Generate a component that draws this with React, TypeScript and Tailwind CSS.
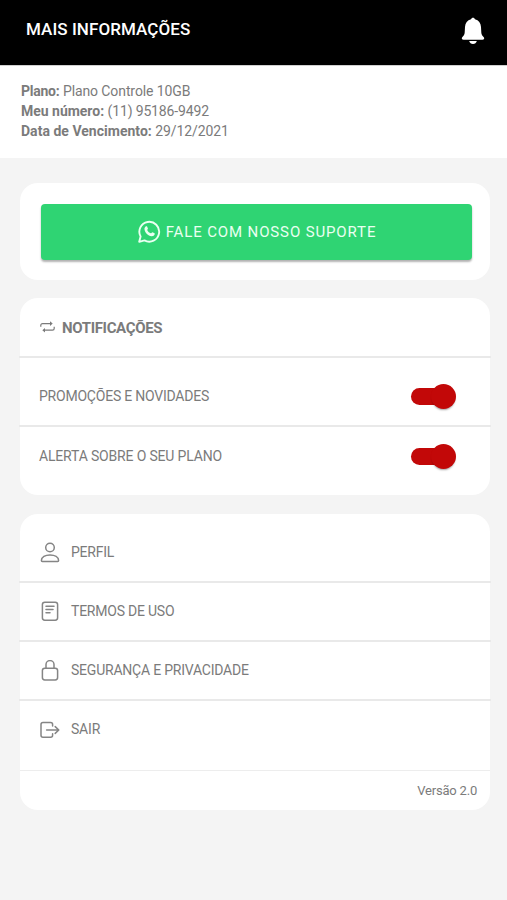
import type { ReactNode } from "react"

const details = [
  { label: "Plano:", value: "Plano Controle 10GB", labelClass: "tracking-[-0.25px]", valueClass: "tracking-[-0.1px]" },
  { label: "Meu número:", value: "(11) 95186-9492", labelClass: "tracking-[-0.02px]", valueClass: "tracking-[-0.15px]" },
  { label: "Data de Vencimento:", value: "29/12/2021", labelClass: "tracking-[0.02px]", valueClass: "tracking-[-0.1px]" },
]

const menu = [
  {
    title: "PERFIL",
    titleClass: "tracking-[-0.25px]",
    icon: (
      <>
        <circle cx="10" cy="5.5" r="4.3" />
        <path d="M1.4 18.6c0-3.6 3.8-5.700 8.6-5.700s8.6 2.100 8.6 5.700c0 .5-.4.9-.9.9H2.3c-.5 0-.9-.4-.9-.9z" />
      </>
    ),
  },
  {
    title: "TERMOS DE USO",
    titleClass: "tracking-[-0.22px]",
    icon: (
      <>
        <rect x="2.4" y="1.2" width="15.2" height="18" rx="2.4" />
        <path d="M6 5.2h8M6 8.4h7M6 11.8h4" />
      </>
    ),
  },
  {
    title: "SEGURANÇA E PRIVACIDADE",
    titleClass: "tracking-[-0.22px]",
    icon: (
      <>
        <rect x="2.4" y="8.2" width="15.2" height="11.8" rx="2.4" />
        <path d="M6 8.2V4.6a4 4 0 0 1 8 0v3.6" />
      </>
    ),
  },
  {
    title: "SAIR",
    titleClass: "tracking-[-0.2px]",
    icon: (
      <>
        <path d="M12.6 7V5.500c0-1.200-.9-2-2-2H3c-1.200 0-2 .8-2 2v10.800c0 1.200.8 2 2 2h7.600c1.100 0 2-.8 2-2V14.800" />
        <path d="M6.600 11h12.200M15.200 7.600l3.600 3.400-3.600 3.400" />
      </>
    ),
  },
]

function Card({ className, children }: { className: string; children: ReactNode }) {
  return <section className={`mr-[17px] ml-5 rounded-[18px] bg-white ${className}`}>{children}</section>
}

function Divider() {
  return <div className="-mx-px h-0.5 bg-[#e9e9e9]" />
}

function Toggle() {
  return (
    <div className="flex h-[26px] w-[45px] items-center" role="switch" aria-checked="true">
      <div className="flex h-[17px] w-[44px] items-center justify-end rounded-full bg-[#c20808]">
        <div className="-mr-px size-[25px] shrink-0 rounded-full bg-[#c20808] shadow-[0_2px_2px_-1px_rgba(0,0,0,0.35)]" />
      </div>
    </div>
  )
}

export default function App() {
  return (
    <main className="min-h-[900px] w-full bg-[#f4f4f4] font-['Roboto','Liberation_Sans',sans-serif] text-sm text-[#7b7b7b]">
      <header className="flex h-[65px] items-center justify-between bg-black pr-[22px] pb-[6px] pl-[26px] text-white">
        <h1 className="text-[17px] font-medium tracking-[0.07px]">MAIS INFORMAÇÕES</h1>
        <svg className="mt-[3px] h-7 w-6" viewBox="0 0 24 28" fill="currentColor">
          <path d="M12 .8c1 0 1.700.6 2 1.500 3.700 1 5.800 3.800 6 7.600l.3 5.600c.1 2 .9 3 2.300 4.600 1.200 1.400.6 2.600-1.200 2.600H2.600c-1.800 0-2.400-1.200-1.200-2.600 1.400-1.600 2.200-2.600 2.300-4.600L4 9.900c.2-3.800 2.300-6.600 6-7.600.3-.9 1-1.500 2-1.500z" />
          <path d="M8.200 24h7.600c-.5 1.900-1.900 3-3.800 3s-3.300-1.100-3.800-3z" />
        </svg>
      </header>

      <div className="h-[93px] border-t border-[#d0d0d0] bg-white px-[21px] pt-[15px]">
        {details.map((item) => (
          <p key={item.label} className="flex h-5 items-center gap-[3.5px]">
            <b className={`font-bold ${item.labelClass}`}>{item.label}</b>
            <span className={item.valueClass}>{item.value}</span>
          </p>
        ))}
      </div>

      <Card className="mt-[25px] h-[97px] pt-[21px] pr-[18px] pl-[21px]">
        <button className="flex h-14 w-full items-center justify-center gap-[5px] rounded bg-[#2fd473] pl-px text-[15px] text-[#eafff1] shadow-[0_2px_2px_rgba(0,0,0,0.3)]">
          <svg className="mb-px size-[23px]" viewBox="0 0 23 23" fill="none">
            <path
              d="M1.200 21.800l1.400-5.300A9.900 9.900 0 1 1 6.500 20.400z"
              stroke="currentColor"
              strokeWidth="1.900"
              strokeLinejoin="round"
            />
            <path
              d="M7.900 6.300c.5-.3 1-.2 1.200.3l.8 1.900c.2.4-.8 1.300-.6 1.700.8 1.500 1.900 2.500 3.500 3.100.5.200 1.200-1.200 1.700-1l2 1c.4.200.3.600.2 1-.4 1.400-1.800 2.100-3.200 1.900-3.500-.6-6.400-3.300-7-6.700-.2-1.200.3-2.500 1.400-3.200z"
              fill="currentColor"
            />
          </svg>
          <span className="pt-px tracking-[0.87px]">FALE COM NOSSO SUPORTE</span>
        </button>
      </Card>

      <Card className="mt-[18px] h-[197px]">
        <div className="flex h-[58px] items-center gap-[7px] pl-5">
          <svg className="h-3 w-[15px]" viewBox="0 0 15 12" fill="none" stroke="currentColor" strokeWidth="1.200">
            <path d="M.8 5.800V4.300c0-1 .7-1.700 1.700-1.700h8.500M14.200 5.800v1.700c0 1-.7 1.700-1.700 1.700H4" />
            <path d="M10 .3l2.700 2.300L10 4.900zM5 6.900L2.300 9.200 5 11.500z" fill="currentColor" stroke="none" />
          </svg>
          <h2 className="pt-[3px] text-[15px] font-bold tracking-[-0.35px]">NOTIFICAÇÕES</h2>
        </div>
        <Divider />
        <div className="flex h-[67px] items-center justify-between pt-[9px] pr-[34px] pl-[19px]">
          <span className="tracking-[-0.22px]">PROMOÇÕES E NOVIDADES</span>
          <Toggle />
        </div>
        <Divider />
        <div className="flex h-[58px] items-center justify-between pr-[34px] pl-[19px]">
          <span className="tracking-[-0.17px]">ALERTA SOBRE O SEU PLANO</span>
          <Toggle />
        </div>
      </Card>

      <Card className="mt-[19px] h-[296px] pt-[10px]">
        {menu.map((item, index) => (
          <div key={item.title}>
            {index > 0 && <Divider />}
            <div className="flex h-[57px] items-center gap-[11px] pl-5">
              <svg
                className="h-[21px] w-5 text-[#858585]"
                viewBox="0 0 20 21"
                fill="none"
                stroke="currentColor"
                strokeWidth="1.500"
                strokeLinecap="round"
                strokeLinejoin="round"
              >
                {item.icon}
              </svg>
              <span className={`pb-px ${item.titleClass}`}>{item.title}</span>
            </div>
          </div>
        ))}
        <footer className="mt-3 flex h-[41px] items-center justify-end border-t border-[#ededed] pr-[13px] text-[13px] tracking-[-0.2px]">
          Versão 2.0
        </footer>
      </Card>
    </main>
  )
}
